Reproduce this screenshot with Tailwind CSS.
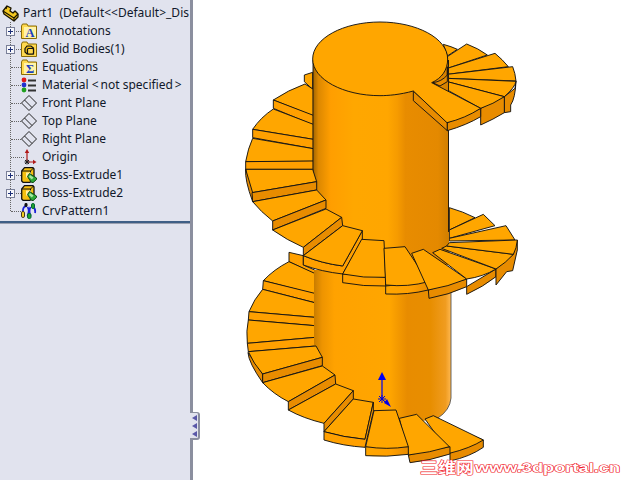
<!DOCTYPE html>
<html>
<head>
<meta charset="utf-8">
<script src="https://cdn.jsdelivr.net/npm/@tailwindcss/browser@4"></script>
</head>
<body class="m-0 bg-white">
<div class="relative flex w-[640px] h-[480px] overflow-hidden bg-white font-['Noto_Sans','Liberation_Sans',sans-serif] text-[12px] text-[#10182a]">
  <aside class="flex flex-col w-[193px] h-full shrink-0 bg-[#e1e3ee] border-r-[3px] border-[#8b8f9f]">
    <div class="relative h-[223px] pt-[4px] border-b-[2px] border-[#3f5f86] shadow-[0_1px_0_#9aa0b0]">
      <div class="absolute left-[10px] top-[22px] h-[189px] border-l border-dotted border-[#666]"></div>

      <div class="flex items-center h-[18px] pl-[2px] gap-[4px] whitespace-pre">
        <svg class="shrink-0" width="17" height="17" viewBox="0 0 17 17"><path d="M1 6 L5 1 L9 3 L8 6 L11 8 L13 6 L16 9 L16 12 L12 16 L2 9Z" fill="#f5c820" stroke="#1a1400" stroke-width="1.3" stroke-linejoin="round"/><path d="M1 6 L12 13 V16 M5 1 L4 4 M12 13 L16 9" fill="none" stroke="#1a1400" stroke-width="1.2"/></svg>
        <span>Part1  (Default&lt;&lt;Default&gt;_Dis</span>
      </div>

      <div class="relative flex items-center h-[18px] pl-[21px] gap-[5px]">
        <div class="absolute left-[11px] top-[9px] w-[10px] border-t border-dotted border-[#666]"></div>
        <svg class="absolute left-[6px] top-[5px]" width="9" height="9" viewBox="0 0 9 9"><rect x=".5" y=".5" width="8" height="8" fill="#f6f7fb" stroke="#7a8098"/><path d="M2 4.5 H7 M4.5 2 V7" stroke="#1c2f78"/></svg>
        <svg class="relative shrink-0" width="16" height="16" viewBox="0 0 16 16"><path d="M.5 3 L1.5 1 H6 L7 3 H15.5 V15.5 H.5Z" fill="#ffd94f" stroke="#8a6c08"/><rect x="3" y="4" width="12" height="11" fill="#fff3a8"/><text x="9" y="14" text-anchor="middle" font-size="12.5" font-weight="700" font-family="Liberation Serif" fill="#1a3fc0">A</text></svg>
        <span>Annotations</span>
      </div>

      <div class="relative flex items-center h-[18px] pl-[21px] gap-[5px]">
        <div class="absolute left-[11px] top-[9px] w-[10px] border-t border-dotted border-[#666]"></div>
        <svg class="absolute left-[6px] top-[5px]" width="9" height="9" viewBox="0 0 9 9"><rect x=".5" y=".5" width="8" height="8" fill="#f6f7fb" stroke="#7a8098"/><path d="M2 4.5 H7 M4.5 2 V7" stroke="#1c2f78"/></svg>
        <svg class="relative shrink-0" width="16" height="16" viewBox="0 0 16 16"><path d="M.5 3 L1.5 1 H6 L7 3 H15.5 V15.5 H.5Z" fill="#ffd94f" stroke="#8a6c08"/><path d="M4 7.5 L6 5 H10 L12.5 7 V13 H6 L4 11Z" fill="#e8b818" stroke="#111" stroke-width="1.2"/><rect x="6.5" y="7.5" width="6" height="5.5" rx="1" fill="#ffd94f" stroke="#111" stroke-width="1.2"/></svg>
        <span>Solid Bodies(1)</span>
      </div>

      <div class="relative flex items-center h-[18px] pl-[21px] gap-[5px]">
        <div class="absolute left-[11px] top-[9px] w-[10px] border-t border-dotted border-[#666]"></div>
        <svg class="relative shrink-0" width="16" height="16" viewBox="0 0 16 16"><path d="M.5 3 L1.5 1 H6 L7 3 H15.5 V15.5 H.5Z" fill="#ffd94f" stroke="#8a6c08"/><rect x="3" y="4" width="12" height="11" fill="#fff3a8"/><text x="9" y="14" text-anchor="middle" font-size="12.5" font-weight="700" font-family="Liberation Serif" fill="#1a3fc0">Σ</text></svg>
        <span>Equations</span>
      </div>

      <div class="relative flex items-center h-[18px] pl-[21px] gap-[5px]">
        <div class="absolute left-[11px] top-[9px] w-[10px] border-t border-dotted border-[#666]"></div>
        <svg class="relative shrink-0" width="16" height="16" viewBox="0 0 16 16"><circle cx="3" cy="3" r="2.4" fill="#e01818"/><circle cx="3" cy="8" r="2.4" fill="#2030d0"/><circle cx="3" cy="13" r="2.4" fill="#20a020"/><path d="M7 3.5 H15 M7 8.5 H15 M7 13.5 H15" stroke="#333" stroke-width="2"/></svg>
        <span>Material <span class="mr-[2px]">&lt;</span>not specified<span class="ml-[2px]">&gt;</span></span>
      </div>

      <div class="relative flex items-center h-[18px] pl-[21px] gap-[5px]">
        <div class="absolute left-[11px] top-[9px] w-[10px] border-t border-dotted border-[#666]"></div>
        <svg class="relative shrink-0" width="16" height="16" viewBox="0 0 16 16"><path d="M.5 8 L8 .5 L15.5 8 L8 15.5Z M3.5 5 L11 12.5" fill="none" stroke="#222"/></svg>
        <span>Front Plane</span>
      </div>

      <div class="relative flex items-center h-[18px] pl-[21px] gap-[5px]">
        <div class="absolute left-[11px] top-[9px] w-[10px] border-t border-dotted border-[#666]"></div>
        <svg class="relative shrink-0" width="16" height="16" viewBox="0 0 16 16"><path d="M.5 8 L8 .5 L15.5 8 L8 15.5Z M3.5 5 L11 12.5" fill="none" stroke="#222"/></svg>
        <span>Top Plane</span>
      </div>

      <div class="relative flex items-center h-[18px] pl-[21px] gap-[5px]">
        <div class="absolute left-[11px] top-[9px] w-[10px] border-t border-dotted border-[#666]"></div>
        <svg class="relative shrink-0" width="16" height="16" viewBox="0 0 16 16"><path d="M.5 8 L8 .5 L15.5 8 L8 15.5Z M3.5 5 L11 12.5" fill="none" stroke="#222"/></svg>
        <span>Right Plane</span>
      </div>

      <div class="relative flex items-center h-[18px] pl-[21px] gap-[5px]">
        <div class="absolute left-[11px] top-[9px] w-[13px] border-t border-dotted border-[#666]"></div>
        <svg class="relative shrink-0" width="16" height="16" viewBox="0 0 16 16"><path d="M6 13 V3 M6 13 H14" stroke="#b01818" fill="none" stroke-width="1.2"/><path d="M6 0 L3.8 4 H8.2Z M15.5 13 L12 10.8 V15.2Z" fill="#b01818"/><path d="M4 11 L8 15 M8 11 L4 15 M3.5 13 H8.5 M6 10.5 V15.5" stroke="#222"/></svg>
        <span>Origin</span>
      </div>

      <div class="relative flex items-center h-[18px] pl-[21px] gap-[5px]">
        <div class="absolute left-[11px] top-[9px] w-[10px] border-t border-dotted border-[#666]"></div>
        <svg class="absolute left-[6px] top-[5px]" width="9" height="9" viewBox="0 0 9 9"><rect x=".5" y=".5" width="8" height="8" fill="#f6f7fb" stroke="#7a8098"/><path d="M2 4.5 H7 M4.5 2 V7" stroke="#1c2f78"/></svg>
        <svg class="relative shrink-0" width="16" height="16" viewBox="0 0 16 16"><path d="M.7 4 L3.5 .7 H12 L13 2 V11 L9 15.3 H2 L.7 14Z" fill="#f5c010" stroke="#111" stroke-width="1.3" stroke-linejoin="round"/><path d="M1 4 H9.5 V15 M9.5 4 L12.5 1" fill="none" stroke="#111"/><rect x="5" y="5.5" width="5" height="5" fill="#fff0a0"/><path d="M8.5 6.5 L15.5 11 V12.5 L12 15.7 L10 15 L6.5 9.5Z" fill="#2ea838" stroke="#104a18"/><path d="M9 8 L12.5 10.5 L10.8 12.5 L8 10Z" fill="#a8e8a0"/></svg>
        <span>Boss-Extrude1</span>
      </div>

      <div class="relative flex items-center h-[18px] pl-[21px] gap-[5px]">
        <div class="absolute left-[11px] top-[9px] w-[10px] border-t border-dotted border-[#666]"></div>
        <svg class="absolute left-[6px] top-[5px]" width="9" height="9" viewBox="0 0 9 9"><rect x=".5" y=".5" width="8" height="8" fill="#f6f7fb" stroke="#7a8098"/><path d="M2 4.5 H7 M4.5 2 V7" stroke="#1c2f78"/></svg>
        <svg class="relative shrink-0" width="16" height="16" viewBox="0 0 16 16"><path d="M.7 4 L3.5 .7 H12 L13 2 V11 L9 15.3 H2 L.7 14Z" fill="#f5c010" stroke="#111" stroke-width="1.3" stroke-linejoin="round"/><path d="M1 4 H9.5 V15 M9.5 4 L12.5 1" fill="none" stroke="#111"/><rect x="5" y="5.5" width="5" height="5" fill="#fff0a0"/><path d="M8.5 6.5 L15.5 11 V12.5 L12 15.7 L10 15 L6.5 9.5Z" fill="#2ea838" stroke="#104a18"/><path d="M9 8 L12.5 10.5 L10.8 12.5 L8 10Z" fill="#a8e8a0"/></svg>
        <span>Boss-Extrude2</span>
      </div>

      <div class="relative flex items-center h-[18px] pl-[21px] gap-[5px]">
        <div class="absolute left-[11px] top-[9px] w-[10px] border-t border-dotted border-[#666]"></div>
        <svg class="relative shrink-0" width="16" height="16" viewBox="0 0 16 16"><path d="M6 3 Q1.5 3 2 9 M6.5 4 Q9 7 6.5 13 M11 3 Q15 5 14 10 M9.5 4 Q7.5 8 9.5 13" fill="none" stroke="#1a20d8" stroke-width="1.8"/><rect x="3.5" y="0" width="3" height="4" rx="1.4" fill="#111"/><rect x="10.5" y="0.5" width="3" height="5" rx="1.4" fill="#20a030" stroke="#063"/><rect x=".5" y="8.5" width="3" height="6" rx="1.4" fill="#f5d020" stroke="#432"/><rect x="6.5" y="10.5" width="3.5" height="5" rx="1.4" fill="#20a030" stroke="#063"/></svg>
        <span>CrvPattern1</span>
      </div>
    </div>
    <div class="flex-1"></div>
  </aside>

  <main class="relative flex-1 h-full">
    <svg class="block" width="447" height="480" viewBox="193 0 447 480">
      <defs>
        <linearGradient id="upperBody" x1="0" x2="1" y1="0" y2="0">
          <stop offset="0" stop-color="#a26500"/><stop offset=".04" stop-color="#dd8800"/><stop offset=".13" stop-color="#ff9e00"/><stop offset=".3" stop-color="#ffa700"/><stop offset=".55" stop-color="#ffa600"/><stop offset=".62" stop-color="#f69b00"/><stop offset=".68" stop-color="#e88c00"/><stop offset=".92" stop-color="#e48900"/><stop offset="1" stop-color="#d07e00"/>
        </linearGradient>
        <linearGradient id="lowerBody" x1="0" x2="1" y1="0" y2="0">
          <stop offset="0" stop-color="#c87c00"/><stop offset=".06" stop-color="#ee9400"/><stop offset=".15" stop-color="#ffa200"/><stop offset=".55" stop-color="#ffa600"/><stop offset=".68" stop-color="#e88c00"/><stop offset=".85" stop-color="#e88e00"/><stop offset=".96" stop-color="#f09c20"/><stop offset="1" stop-color="#ffb850"/>
        </linearGradient>
        <linearGradient id="frontRiser" x1="0" x2="1" y1="0" y2="0">
          <stop offset="0" stop-color="#ffa600"/><stop offset=".6" stop-color="#ff9f00"/><stop offset="1" stop-color="#e88c00"/>
        </linearGradient>
      </defs>

      <!-- lower flight, parts behind the column -->
      <g transform="translate(240 230) scale(.33333)" fill="#ffa600" stroke="#111" stroke-width="2.8" stroke-linejoin="round">
        <path d="M147 67 L190 77 V105 L224 120 V132 L147 95Z" fill="#ffa000"/>
        <path d="M70 152 Q102 118 147 95 L224 130 V192Z"/>
        <path d="M70 152 L68 178 L224 218 V190Z" fill="#ffa000"/>
        <path d="M27 245 Q42 208 68 178 L224 218 V262Z"/>
        <path d="M27 245 L25 270 L224 287 V262Z" fill="#ffa000"/>
        <path d="M22 340 Q18 302 25 270 L224 287 L226 322Z"/>
        <path d="M22 340 L25 365 L228 348 L226 322Z" fill="#ffa000"/>
      </g>

      <path d="M314 270 V345 L322 370 L335 385 L353 400 L373 412 L396 422 L417 422 L438 418 Q450 410 451 398 V270Z" fill="url(#lowerBody)"/>
      <path d="M451 270 V398 Q450 410 438 418" fill="none" stroke="#444" stroke-width=".8"/>

      <!-- lower flight, parts in front of the column -->
      <g transform="translate(240 230) scale(.33333)" fill="#ffa600" stroke="#111" stroke-width="2.8" stroke-linejoin="round">
        <path d="M24 368 Q26 398 68 458 V432Z" fill="#e88c00"/>
        <path d="M25 365 L228 348 L247 382 L68 432 Q40 400 25 365Z"/>
        <path d="M68 432 V458 L247 407 V382Z" fill="#e88c00"/>
        <path d="M68 458 L247 408 L285 435 L145 515 Q100 492 68 458Z"/>
        <path d="M145 515 V540 L287 462 L285 435Z" fill="#e88c00"/>
        <path d="M145 540 L287 462 L340 482 L252 580 Q190 565 145 540Z"/>
        <path d="M252 580 V605 L340 507 V482Z" fill="#e88c00"/>
        <path d="M252 605 L340 507 L400 517 L375 628 Q310 622 252 605Z"/>
        <path d="M252 605 V630 Q310 648 375 652 L400 545 V517 L375 628 Q310 622 252 605Z" fill="#ffa000"/>
        <path d="M578 568 L730 630 V652 Q690 680 630 693 V672Z" fill="#e88c00"/>
        <path d="M555 567 L580 557 L730 630 Q690 655 628 670Z"/>
        <path d="M505 675 L510 698 Q570 692 630 672 V650Z" fill="#e88c00"/>
        <path d="M478 565 L530 553 L628 650 Q570 668 505 675Z"/>
        <path d="M377 650 V677 Q440 682 505 673 V650Z" fill="url(#frontRiser)"/>
        <path d="M377 650 L402 542 L468 540 L505 650 Q440 660 377 650Z"/>
      </g>

      <!-- axis triad -->
      <g>
        <path d="M382 378 V400" stroke="#0000f0" stroke-width="1.2"/>
        <path d="M382 372 L378 380 H386Z M391 407 L384 403 L387 399Z" fill="#0000f0"/>
        <path d="M378 399 H386 M382 395 V403 M379 396 L385 402 M385 396 L379 402 M383 400 L388 404" stroke="#0000d8" stroke-width="1"/>
      </g>

      <!-- upper flight, back and left steps; right steps of the lower band -->
      <g transform="translate(240 10) scale(.33333)" fill="#ffa600" stroke="#111" stroke-width="2.8" stroke-linejoin="round">
        <path d="M610 103 Q635 110 652 118 L622 138 Z"/>
        <path d="M622 140 L680 102 Q715 115 742 135 L622 175Z"/>
        <path d="M622 175 L765 130 Q787 148 805 170 L622 193Z"/>
        <path d="M825 235 L793 260 V308 L812 305 V285 Q826 265 828 213Z" fill="#e88c00"/>
        <path d="M622 193 L818 170 Q826 190 828 213 L622 205Z"/>
        <path d="M622 205 L828 214 Q825 232 793 260 L622 215Z"/>
        <path d="M722 295 V345 Q760 328 793 308 V260Z" fill="#e88c00"/>
        <path d="M600 228 L622 215 L793 260 Q760 282 722 295Z"/>
        <path d="M193 195 L218 187 V238 L193 215Z" fill="#ffa600"/>
        <path d="M100 270 Q145 240 195 222 L220 238 V318Z"/>
        <path d="M100 270 V295 L220 345 V316Z" fill="#ffa000"/>
        <path d="M38 358 Q62 322 100 297 L220 343 V388Z"/>
        <path d="M38 358 V383 L220 416 V388Z" fill="#ffa000"/>
        <path d="M17 455 Q24 415 38 385 L220 416 V454Z"/>
        <path d="M17 455 V478 H220 V453Z" fill="#ffa000"/>
        <path d="M628 593 Q670 605 705 623 L628 660Z"/>
        <path d="M628 660 L730 613 L765 647 L628 685Z"/>
        <path d="M628 685 L798 647 L825 690 L628 693Z"/>
      </g>

      <path d="M313 60 V172 L317 190 L326 209 L342 225 L362 240 V265 H449 V60Z" fill="url(#upperBody)"/>
      <path d="M313 60 V173 M448.5 60 V232" fill="none" stroke="#111" stroke-width=".9"/>

      <!-- front band -->
      <g transform="translate(240 10) scale(.33333)" fill="#ffa600" stroke="#111" stroke-width="2.8" stroke-linejoin="round">
        <path d="M17 478 H218 L230 515 L36 548 Q20 512 17 478Z"/>
        <path d="M17 478 Q14 510 38 575 V548Z" fill="#e88c00"/>
        <path d="M36 548 L38 575 L230 540 V515Z" fill="#e88c00"/>
        <path d="M38 575 L230 540 L258 570 L98 633 Q62 605 38 575Z"/>
        <path d="M98 633 V660 L258 595 V570Z" fill="#e88c00"/>
        <path d="M98 660 L258 597 L305 622 L190 712 Q140 690 98 660Z"/>
        <path d="M190 712 V737 L308 647 L305 622Z" fill="#e88c00"/>
      </g>
      <g transform="translate(240 230) scale(.33333)" fill="#ffa600" stroke="#111" stroke-width="2.8" stroke-linejoin="round">
        <path d="M190 77 V105 Q245 125 308 132 L367 28 V2 L308 108 Q245 100 190 77Z" fill="#ffa000"/>
        <path d="M190 77 L308 -13 L367 2 L308 108 Q245 100 190 77Z"/>
        <path d="M308 132 V158 Q370 170 437 168 V142Z" fill="#ffa000"/>
        <path d="M365 28 L432 32 L437 142 Q370 145 308 132Z"/>
        <path d="M437 168 V192 Q505 195 565 180 V155Z" fill="url(#frontRiser)"/>
        <path d="M432 55 L495 50 L565 155 Q505 172 437 165Z"/>
        <path d="M565 180 L567 205 Q625 195 680 170 V147Z" fill="#e88c00"/>
        <path d="M515 70 L550 58 L680 147 Q625 170 565 180Z"/>
        <path d="M680 170 V193 Q730 170 768 140 V117Z" fill="#e88c00"/>
        <path d="M578 68 L600 58 L768 117 Q730 140 680 147Z"/>
        <path d="M832 30 V60 L818 122 L800 125 L768 165 V117 L820 73Z" fill="#e88c00"/>
        <path d="M605 55 L620 48 L820 73 Q798 98 768 117Z"/>
        <path d="M628 38 L832 30 Q830 55 820 73 L620 48Z"/>
      </g>

      <!-- top face and first step -->
      <g transform="translate(240 10) scale(.33333)" fill="#ffa600" stroke="#111" stroke-width="2.8" stroke-linejoin="round">
        <path d="M520 243 V272 L622 362 V338Z" fill="#e88c00"/>
        <path d="M622 338 V362 Q680 345 722 320 V295Z" fill="#e88c00"/>
        <path d="M622 170 V195 Q605 215 578 218 L600 228 L622 215Z" fill="#e88c00"/>
        <path d="M218 147 C218 85 310 36 420 36 C530 36 623 85 623 147 C623 180 605 205 575 218 L722 295 Q675 325 621 338 L520 243 C480 254 445 257 420 257 C310 257 218 208 218 147Z"/>
      </g>

      <!-- site watermark -->
      <g font-weight="700" fill="#fff" stroke="#f01828" stroke-width="1.1" paint-order="stroke">
        <text x="420" y="473" font-size="15" textLength="54" lengthAdjust="spacingAndGlyphs" font-family="Noto Sans CJK SC, sans-serif">三维网</text>
        <text x="475" y="472" font-size="13" textLength="145" lengthAdjust="spacingAndGlyphs" font-family="Liberation Sans, sans-serif">www.3dportal.cn</text>
      </g>
    </svg>

    <!-- collapse handle over the panel edge -->
    <div class="absolute left-[-3px] top-[412px] w-[10px] h-[28px] bg-[#e1e3ee] border-t border-r-2 border-b-2 border-[#8b8f9f] rounded-r-[3px] flex flex-col items-center justify-center gap-[2px]">
      <svg width="5" height="6" viewBox="0 0 5 6"><path d="M0 3 L5 0 V6Z" fill="#5a58a8"/></svg>
      <svg width="5" height="6" viewBox="0 0 5 6"><path d="M0 3 L5 0 V6Z" fill="#5a58a8"/></svg>
      <svg width="5" height="6" viewBox="0 0 5 6"><path d="M0 3 L5 0 V6Z" fill="#5a58a8"/></svg>
    </div>
  </main>
</div>
</body>
</html>
